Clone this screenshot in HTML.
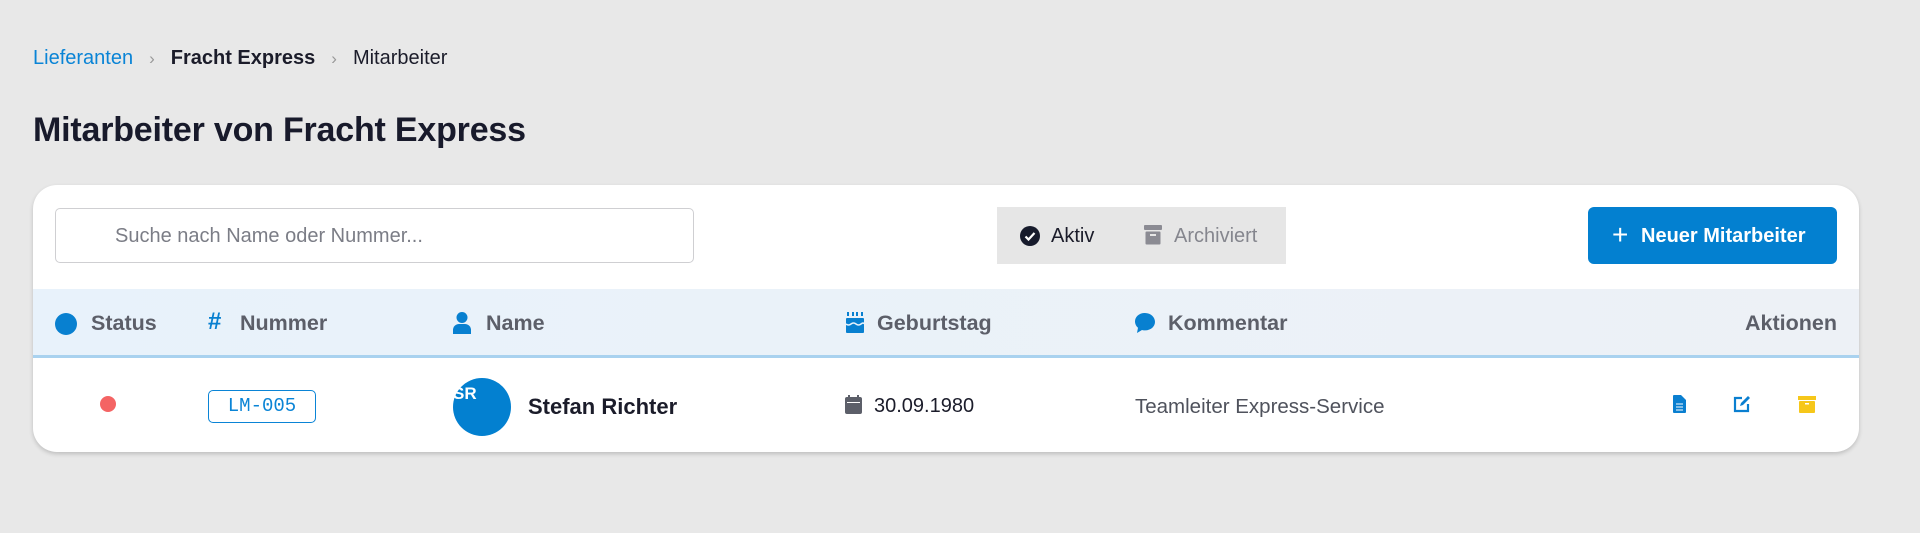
<!DOCTYPE html>
<html><head><meta charset="utf-8"><style>
*{box-sizing:border-box;margin:0;padding:0}
body{width:1920px;height:533px;background:#e8e8e8;font-family:"Liberation Sans",sans-serif;position:relative;overflow:hidden;color:#1b1c2a}
.abs{position:absolute}
.bc{top:47px;left:33px;font-size:20px;display:flex;align-items:center;gap:16px;white-space:nowrap}
.bc .sep{color:#999;font-size:17px}
h1{position:absolute;left:33px;top:111px;font-size:34px;font-weight:bold;letter-spacing:-0.2px;color:#181a2b}
.card{left:33px;top:185px;width:1826px;height:267px;background:#fff;border-radius:24px;box-shadow:0 2px 4px rgba(0,0,0,.18);overflow:hidden}
.search{left:22px;top:23px;width:639px;height:55px;border:1.5px solid #cfcfd2;border-radius:5px;font-size:20px;color:#7b7d86;padding:16px 0 0 59px}
.tog{left:964px;top:22px;width:289px;height:57px;background:#e6e6e6;font-size:20px}
.btn{left:1555px;top:22px;width:249px;height:57px;background:#0380d0;border-radius:6px;color:#fff;font-weight:bold;font-size:20px}
.hdr{left:0;top:104px;width:1826px;height:69px;background:linear-gradient(90deg,#e8f2fb,#edf1f6);border-bottom:3px solid #a9d2ef;font-weight:bold;font-size:21.5px;color:#5c5f69}
.hdr span{position:absolute;top:22px}
.row{left:0;top:173px;width:1826px;height:94px;font-size:20px}
</style></head><body>
<div class="abs bc"><span style="color:#0a84d6">Lieferanten</span><span class="sep">&#8250;</span><span style="font-weight:bold">Fracht Express</span><span class="sep">&#8250;</span><span>Mitarbeiter</span></div>
<h1>Mitarbeiter von Fracht Express</h1>
<div class="abs card">
 <div class="abs search">Suche nach Name oder Nummer...</div>
 <div class="abs tog">
  <svg class="abs" style="left:23px;top:19px" width="20" height="20" viewBox="0 0 20 20"><circle cx="10" cy="10" r="10" fill="#171b2c"/><path d="M5.5 10.5l3 3 6-6.5" stroke="#fff" stroke-width="2.2" fill="none"/></svg>
  <span class="abs" style="left:54px;top:18px;color:#1b1c2a">Aktiv</span>
  <svg class="abs" style="left:147px;top:18px" width="18" height="20" viewBox="0 0 18 20"><rect x="0" y="0" width="18" height="5" rx="1" fill="#8b8b93"/><rect x="1.5" y="6.5" width="15" height="13" rx="1" fill="#8b8b93"/><rect x="6" y="9" width="6" height="2" fill="#e6e6e6"/></svg>
  <span class="abs" style="left:177px;top:18px;color:#85868e">Archiviert</span>
 </div>
 <div class="abs btn"><span class="abs" style="left:24px;top:12px;font-size:28px;font-weight:normal">+</span><span class="abs" style="left:53px;top:18px">Neuer Mitarbeiter</span></div>
 <div class="abs hdr">
  <svg class="abs" style="left:22px;top:24px" width="22" height="22"><circle cx="11" cy="11" r="11" fill="#0880d0"/></svg><span style="left:58px">Status</span>
  <span style="left:175px;color:#0880d0;font-size:24px;top:19px">#</span><span style="left:207px">Nummer</span>
  <svg class="abs" style="left:420px;top:23px" width="18" height="22" viewBox="0 0 18 22"><circle cx="9" cy="5.5" r="5.5" fill="#0880d0"/><path d="M0 22v-4a6 6 0 0 1 6-6h6a6 6 0 0 1 6 6v4z" fill="#0880d0"/></svg><span style="left:453px">Name</span>
  <svg class="abs" style="left:812px;top:22px" width="20" height="22" viewBox="0 0 20 22"><path d="M3 1v4M8 1v4M12 1v4M17 1v4" stroke="#0880d0" stroke-width="2"/><rect x="1" y="7" width="18" height="15" rx="1" fill="#0880d0"/><path d="M1 13q2.5 2 5 0t5 0t5 0t3 0" stroke="#e8f2fb" stroke-width="1.5" fill="none"/></svg><span style="left:844px">Geburtstag</span>
  <svg class="abs" style="left:1101px;top:23px" width="22" height="22" viewBox="0 0 22 22"><path d="M11 1C5 1 1 5 1 9.5c0 2.5 1.2 4.7 3 6.2L3 21l5-3c1 .3 2 .4 3 .4 6 0 10-4 10-8.5S17 1 11 1z" fill="#0880d0"/></svg><span style="left:1135px">Kommentar</span>
  <span style="right:22px">Aktionen</span>
 </div>
 <div class="abs row">
  <div class="abs" style="left:67px;top:38px;width:16px;height:16px;border-radius:50%;background:#f46464"></div>
  <div class="abs" style="left:175px;top:32px;width:108px;height:33px;border:1.5px solid #0a84d6;border-radius:5px;color:#0a84d6;font-family:'Liberation Mono',monospace;font-size:19px;text-align:center;line-height:30px">LM-005</div>
  <div class="abs" style="left:420px;top:20px;width:58px;height:58px;border-radius:50%;background:#0380d0;color:#fff;font-weight:bold;font-size:17px;padding:6px 0 0 0">SR</div>
  <span class="abs" style="left:495px;top:36px;font-weight:bold;font-size:22px">Stefan Richter</span>
  <svg class="abs" style="left:812px;top:37px" width="17" height="19" viewBox="0 0 17 19"><path d="M4 0v4M13 0v4" stroke="#5c5f69" stroke-width="2"/><rect x="0" y="2" width="17" height="17" rx="2" fill="#5c5f69"/><rect x="2" y="7" width="13" height="1" fill="#fff"/></svg>
  <span class="abs" style="left:841px;top:37px">30.09.1980</span>
  <span class="abs" style="left:1102px;top:37px;color:#4f525c;font-size:20.5px">Teamleiter Express-Service</span>
  <svg class="abs" style="left:1640px;top:37px" width="13" height="18" viewBox="0 0 13 18"><path d="M0 1a1 1 0 0 1 1-1h7l5 5v12a1 1 0 0 1-1 1H1a1 1 0 0 1-1-1z" fill="#0a7fd0"/><path d="M3 9h7M3 12h7M3 15h7" stroke="#fff" stroke-width="1"/></svg>
  <svg class="abs" style="left:1700px;top:37px" width="18" height="18" viewBox="0 0 18 18"><path d="M9 3H2v13h13V9" stroke="#0a7fd0" stroke-width="2.2" fill="none"/><path d="M7 11l1-3 7-7 2 2-7 7z" fill="#0a7fd0"/></svg>
  <svg class="abs" style="left:1765px;top:38px" width="18" height="17" viewBox="0 0 18 17"><rect x="0" y="0" width="18" height="4" fill="#f6c71a"/><rect x="1" y="5" width="16" height="12" rx="1" fill="#f6c71a"/><rect x="7" y="7" width="4" height="1.5" fill="#fff"/></svg>
 </div>
</div>
</body></html>
